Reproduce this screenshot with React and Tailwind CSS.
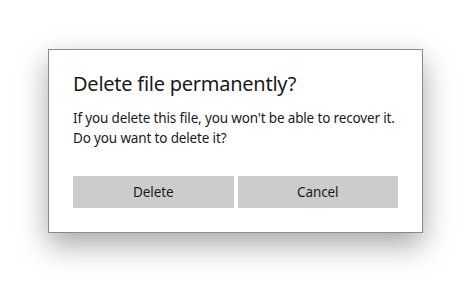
export default function App() {
  return (
    <div className="w-[472px] h-[282px] bg-white pt-[49px] pl-[48px]" style={{ fontFamily: '"Noto Sans", sans-serif' }}>
      <div className="w-[375px] h-[184px] bg-white border border-[#8a8a8a] shadow-[0_12px_28px_rgba(0,0,0,0.35)] flex flex-col px-[24px] pb-[24px]">
        <div className="text-[20px] leading-[28px] tracking-[-0.25px] text-[#1a1a1a] mt-[20px] whitespace-nowrap">Delete file permanently?</div>
        <div className="text-[13.5px] leading-[20px] tracking-[-0.15px] text-[#1a1a1a] mt-[10px] whitespace-nowrap">
          If you delete this file, you won't be able to recover it.
          <br />
          Do you want to delete it?
        </div>
        <div className="mt-auto flex gap-[4px]">
          <div className="flex-1 h-[32px] bg-[#cccccc] flex items-center justify-center text-[13.5px] tracking-[-0.1px] text-[#1a1a1a]">Delete</div>
          <div className="flex-1 h-[32px] bg-[#cccccc] flex items-center justify-center text-[13.5px] tracking-[-0.1px] text-[#1a1a1a]">Cancel</div>
        </div>
      </div>
    </div>
  );
}
